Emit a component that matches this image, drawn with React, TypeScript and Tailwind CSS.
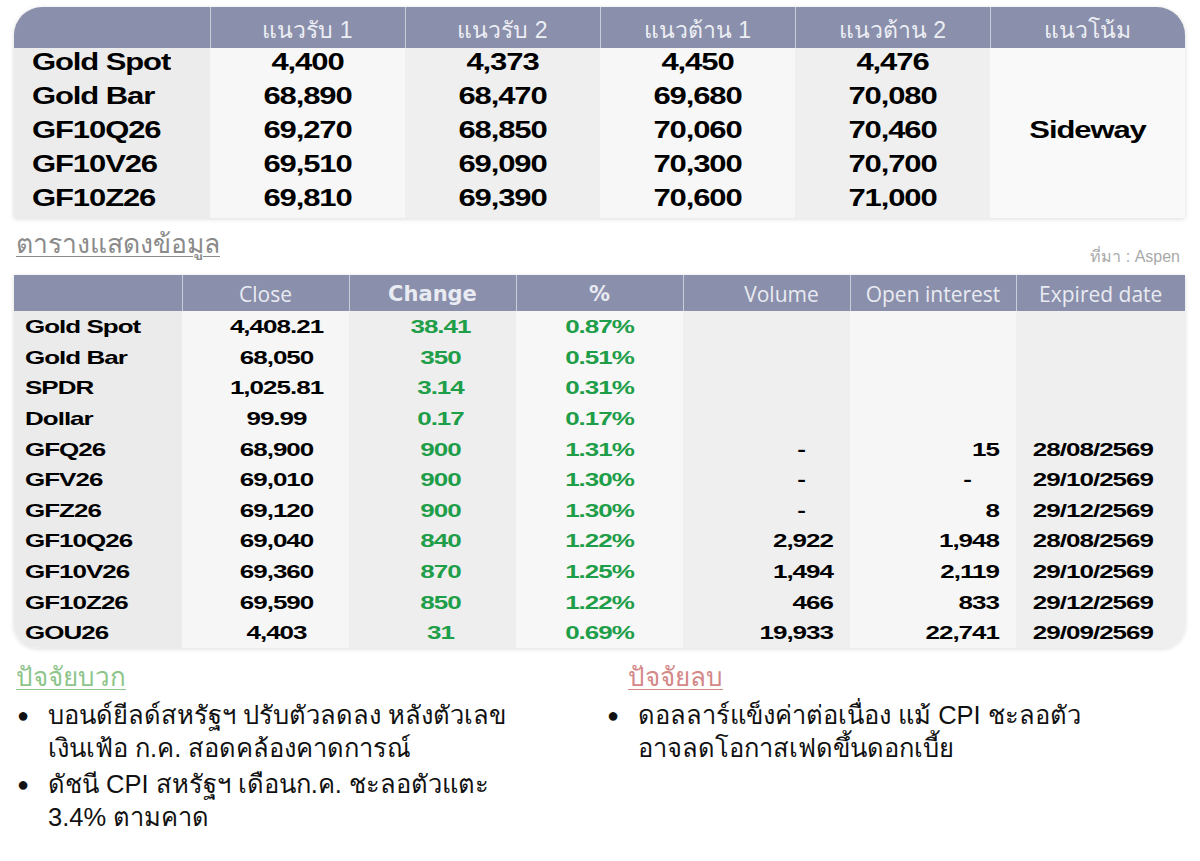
const sans = "font-['Liberation_Sans','Noto_Sans',sans-serif]";

const levels = [
  ["Gold Spot", "4,400", "4,373", "4,450", "4,476"],
  ["Gold Bar", "68,890", "68,470", "69,680", "70,080"],
  ["GF10Q26", "69,270", "68,850", "70,060", "70,460"],
  ["GF10V26", "69,510", "69,090", "70,300", "70,700"],
  ["GF10Z26", "69,810", "69,390", "70,600", "71,000"],
];

const quotes = [
  ["Gold Spot", "4,408.21", "38.41", "0.87%", "", "", ""],
  ["Gold Bar", "68,050", "350", "0.51%", "", "", ""],
  ["SPDR", "1,025.81", "3.14", "0.31%", "", "", ""],
  ["Dollar", "99.99", "0.17", "0.17%", "", "", ""],
  ["GFQ26", "68,900", "900", "1.31%", "-", "15", "28/08/2569"],
  ["GFV26", "69,010", "900", "1.30%", "-", "-", "29/10/2569"],
  ["GFZ26", "69,120", "900", "1.30%", "-", "8", "29/12/2569"],
  ["GF10Q26", "69,040", "840", "1.22%", "2,922", "1,948", "28/08/2569"],
  ["GF10V26", "69,360", "870", "1.25%", "1,494", "2,119", "29/10/2569"],
  ["GF10Z26", "69,590", "850", "1.22%", "466", "833", "29/12/2569"],
  ["GOU26", "4,403", "31", "0.69%", "19,933", "22,741", "29/09/2569"],
];

const shade1 = ["bg-[#ececec]", "bg-[#f7f7f7]", "bg-[#efefef]", "bg-[#f7f7f7]", "bg-[#efefef]", "bg-[#f9f9f9]"];
const shade2 = ["bg-[#ebebeb]", "bg-[#f6f6f6]", "bg-[#eeeeee]", "bg-[#f7f7f7]", "bg-[#efefef]", "bg-[#f6f6f6]", "bg-[#efefef]"];

// squashed heavy numerals like the source sheet
const Big = ({ children }: { children: React.ReactNode }) => (
  <span className="inline-block scale-y-[0.78] text-[31px] font-bold leading-[18px] tracking-[-1.1px]">{children}</span>
);

const Small = ({ children }: { children: React.ReactNode }) => (
  <span className="inline-block scale-y-[0.74] text-[26px] font-bold leading-[16px] tracking-[-1px]">{children}</span>
);

function LevelsTable() {
  const heads = ["แนวรับ 1", "แนวรับ 2", "แนวต้าน 1", "แนวต้าน 2", "แนวโน้ม"];
  return (
    <div className="ml-[14px] mt-[7px] w-[1171px] overflow-hidden rounded-t-[28px] shadow-[0_1px_5px_rgba(0,0,0,0.14)]">
      <table className="w-full table-fixed border-collapse">
        <colgroup>
          <col className="w-[196px]" />
          {heads.map((h) => (
            <col key={h} className="w-[195px]" />
          ))}
        </colgroup>
        <thead>
          <tr className="h-[41px] bg-[#8a8fab]">
            <th className="border-r border-[#c9ccd9] p-0" />
            {heads.map((h, i) => (
              <th
                key={h}
                className={`p-0 pt-[4px] text-[23px] font-normal leading-[30px] text-[#eceef4] ${i < 4 ? "border-r border-[#c9ccd9]" : ""}`}
              >
                {h}
              </th>
            ))}
          </tr>
        </thead>
        <tbody>
          {levels.map((r, ri) => (
            <tr key={r[0]} className="h-[34px]">
              {r.map((c, ci) => (
                <td
                  key={ci}
                  className={`${shade1[ci]} ${ci === 0 ? "pl-[18px] text-left" : "text-center"} p-0 pb-[2px] leading-none text-black`}
                >
                  <Big>{c}</Big>
                </td>
              ))}
              {ri === 0 && (
                <td rowSpan={5} className={`${shade1[5]} p-0 pb-[2px] text-center leading-none text-black`}>
                  <Big>Sideway</Big>
                </td>
              )}
            </tr>
          ))}
        </tbody>
      </table>
    </div>
  );
}

function QuoteTable() {
  const heads = [
    { t: "Close", c: "font-['Open_Sans'] font-normal" },
    { t: "Change", c: "font-['DejaVu_Sans'] font-bold text-[20px]" },
    { t: "%", c: "font-['DejaVu_Sans'] font-bold text-[20px]" },
    { t: "Volume", c: "font-['Open_Sans'] font-normal" },
    { t: "Open interest", c: "font-['Open_Sans'] font-normal" },
    { t: "Expired date", c: "font-['Open_Sans'] font-normal" },
  ];
  const widths = ["w-[168px]", "w-[167px]", "w-[167px]", "w-[167px]", "w-[167px]", "w-[166px]", "w-[169px]"];
  return (
    <div className="ml-[14px] w-[1171px] overflow-hidden rounded-b-[24px] shadow-[0_1px_5px_rgba(0,0,0,0.14)]">
      <table className="w-full table-fixed border-collapse">
        <colgroup>
          {widths.map((w, i) => (
            <col key={i} className={w} />
          ))}
        </colgroup>
        <thead>
          <tr className="h-[36px] bg-[#8a8fab]">
            <th className="border-r border-[#c9ccd9] p-0" />
            {heads.map((h, i) => (
              <th
                key={h.t}
                className={`p-0 pt-[1px] text-[21px] leading-[28px] text-[#e9ebf2] ${h.c} ${
                  i === 3 ? "pl-[30px]" : ""
                } ${i < 5 ? "border-r border-[#c9ccd9]" : ""}`}
              >
                {h.t}
              </th>
            ))}
          </tr>
        </thead>
        <tbody>
          {quotes.map((r) => (
            <tr key={r[0]} className="h-[30.6px]">
              {r.map((c, ci) => {
                let align = "text-center";
                if (ci === 0) align = "text-left pl-[11px]";
                else if (ci === 1) align = "text-center pl-[22px]";
                else if (ci === 2) align = "text-center pl-[16px]";
                else if (ci === 4 || ci === 5) align = c === "-" ? "text-right pr-[45px]" : "text-right pr-[17px]";
                else if (ci === 6) align = "text-right pr-[32px]";
                const green = ci === 2 || ci === 3;
                return (
                  <td
                    key={ci}
                    className={`${shade2[ci]} ${align} pt-[4px] pb-0 leading-none ${green ? "text-[#1f9e4a]" : "text-black"}`}
                  >
                    <Small>{c}</Small>
                  </td>
                );
              })}
            </tr>
          ))}
        </tbody>
      </table>
    </div>
  );
}

function Factor({ title, color, items, titleIndent }: { title: string; color: string; items: string[][]; titleIndent: string }) {
  return (
    <div>
      <div className={`${titleIndent} text-[26px] leading-[34px] underline decoration-1 underline-offset-[3px] ${color}`}>{title}</div>
      <ul className="mt-[5px] flex flex-col gap-[3px]">
        {items.map((lines, i) => (
          <li key={i} className="flex text-[25.5px] leading-[33px] text-[#111]">
            <span className="w-[34px] shrink-0 pl-[3px] text-[20px]">●</span>
            <div>
              {lines.map((l) => (
                <div key={l}>{l}</div>
              ))}
            </div>
          </li>
        ))}
      </ul>
    </div>
  );
}

export default function App() {
  return (
    <div className={`h-[861px] w-[1200px] overflow-hidden bg-white ${sans}`}>
      <LevelsTable />

      <div className="ml-[14px] flex h-[57px] w-[1171px] items-end justify-between pb-[8px]">
        <div className="mb-[8px] pl-[2px] text-[26.5px] leading-[30px] text-[#8b8b8b] underline decoration-1 underline-offset-[3px]">
          ตารางแสดงข้อมูล
        </div>
        <div className="pr-[5px] text-[16px] leading-[20px] text-[#a9a9a9]">ที่มา : Aspen</div>
      </div>

      <QuoteTable />

      <div className="ml-[14px] mt-[12px] grid w-[1171px] grid-cols-[590px_1fr]">
        <Factor
          title="ปัจจัยบวก"
          titleIndent="pl-[2px]"
          color="text-[#8dc58b]"
          items={[
            ["บอนด์ยีลด์สหรัฐฯ ปรับตัวลดลง หลังตัวเลข", "เงินเฟ้อ ก.ค. สอดคล้องคาดการณ์"],
            ["ดัชนี CPI สหรัฐฯ เดือนก.ค. ชะลอตัวแตะ", "3.4% ตามคาด"],
          ]}
        />
        <Factor
          title="ปัจจัยลบ"
          titleIndent="pl-[24px]"
          color="text-[#d48888]"
          items={[["ดอลลาร์แข็งค่าต่อเนื่อง แม้ CPI ชะลอตัว", "อาจลดโอกาสเฟดขึ้นดอกเบี้ย"]]}
        />
      </div>
    </div>
  );
}
